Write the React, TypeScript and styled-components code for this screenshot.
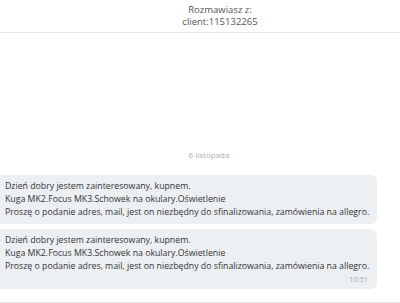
import React from "react";
import styled, { createGlobalStyle } from "styled-components";

const GlobalStyle = createGlobalStyle`
  html, body {
    margin: 0;
    padding: 0;
    background: #fff;
  }
  body {
    font-family: "Open Sans", "Liberation Sans", sans-serif;
  }
`;

const Page = styled.div`
  width: 400px;
  height: 303px;
  display: flex;
  flex-direction: column;
  overflow: hidden;
`;

const Header = styled.div`
  height: 32px;
  border-bottom: 1px solid #e6e6e6;
  display: flex;
  flex-direction: column;
  align-items: center;
  justify-content: center;
  padding-left: 40px;
  font-size: 9.5px;
  line-height: 12px;
  color: #555;
`;

const Conversation = styled.div`
  flex: 1;
  display: flex;
  flex-direction: column;
  justify-content: flex-end;
  padding: 0 23px 13px 0;
  border-bottom: 1px solid #e6e6e6;
`;

const DateLabel = styled.div`
  text-align: center;
  padding-left: 41px;
  font-size: 8px;
  color: #b0b0b0;
  margin-bottom: 15px;
`;

const Bubble = styled.div`
  background: #edf0f3;
  border-radius: 0 6px 6px 0;
  padding: 5px 8px 5px 5px;
  font-size: 8.75px;
  line-height: 13px;
  color: #333;
  & + & {
    margin-top: 5px;
  }
`;

const Line = styled.div`
  white-space: nowrap;
`;

const Time = styled.div`
  text-align: right;
  font-size: 7.5px;
  line-height: 10px;
  color: #aaa;
  margin-top: 1px;
  padding-right: 1px;
`;

const lines = [
  "Dzień dobry jestem zainteresowany, kupnem.",
  "Kuga MK2.Focus MK3.Schowek na okulary.Oświetlenie",
  "Proszę o podanie adres, mail, jest on niezbędny do sfinalizowania, zamówienia na allegro.",
];

const App: React.FC = () => {
  return (
    <Page>
      <GlobalStyle />
      <Header>
        <div>Rozmawiasz z:</div>
        <div>client:115132265</div>
      </Header>
      <Conversation>
        <DateLabel>6 listopada</DateLabel>
        <Bubble>
          {lines.map((l) => (
            <Line key={l}>{l}</Line>
          ))}
        </Bubble>
        <Bubble>
          {lines.map((l) => (
            <Line key={l}>{l}</Line>
          ))}
          <Time>10:51</Time>
        </Bubble>
      </Conversation>
    </Page>
  );
};

export default App;
